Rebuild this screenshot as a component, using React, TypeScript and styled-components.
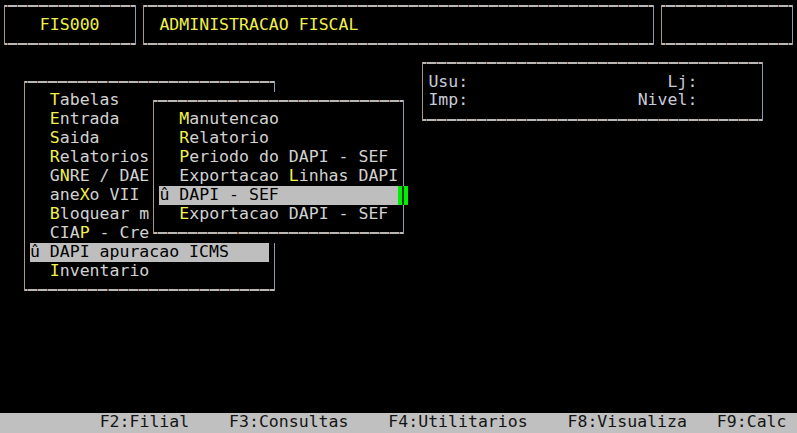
import React from "react";
import styled, { createGlobalStyle } from "styled-components";

// terminal grid: 80 columns x 23 rows
const CW = 797 / 80;
const RH = 18.9;
const OFF = -3;

const GlobalStyle = createGlobalStyle`
  html, body {
    margin: 0;
    padding: 0;
    background: #000;
  }
  body {
    overflow: hidden;
  }
`;

const Screen = styled.div`
  width: 797px;
  height: 433px;
  display: flex;
  flex-direction: column;
  background: #000;
  font-family: "DejaVu Sans Mono", "Liberation Mono", monospace;
  font-size: 16.55px;
  line-height: ${RH}px;
  color: #d2d2d2;
  overflow: hidden;
`;

const Desktop = styled.div`
  position: relative;
  flex: 1;
`;

type Rect = { $c1: number; $r1: number; $c2: number; $r2: number };

// a text-mode window, placed on the terminal grid by its cell corners
const Win = styled.div<Rect>`
  position: absolute;
  left: ${(p) => p.$c1 * CW}px;
  top: ${(p) => p.$r1 * RH + OFF}px;
  width: ${(p) => (p.$c2 - p.$c1 + 1) * CW}px;
  height: ${(p) => (p.$r2 - p.$r1 + 1) * RH}px;
  padding-top: ${RH}px;
  box-sizing: border-box;
  display: flex;
  flex-direction: column;
  background: #000;

  &::before {
    content: "";
    position: absolute;
    left: ${CW / 2 - 0.5}px;
    right: ${CW / 2 - 0.5}px;
    top: ${RH / 2 - 1}px;
    bottom: ${RH / 2 - 1}px;
    border-style: solid;
    border-width: 2px 0;
    border-image: repeating-linear-gradient(
        to right,
        #b8b8b8 0 ${CW / 2 - 0.5}px,
        #8a5a3a ${CW / 2 - 0.5}px ${CW / 2 + 0.5}px,
        #b8b8b8 ${CW / 2 + 0.5}px ${CW}px
      )
      2;
    pointer-events: none;
  }

  &::after {
    content: "";
    position: absolute;
    left: ${CW / 2 - 1}px;
    right: ${CW / 2 - 1}px;
    top: ${RH / 2 - 1}px;
    bottom: ${RH / 2 - 1}px;
    border-left: 1px solid #a89a8a;
    border-right: 1px solid #8e9ab0;
    pointer-events: none;
  }
`;

const Line = styled.div<{ $indent?: number }>`
  height: ${RH}px;
  white-space: pre;
  padding-left: ${(p) => (p.$indent ?? 3) * CW}px;
`;

const Title = styled(Line)`
  color: #f0f04a;
`;

const Selected = styled.div`
  position: relative;
  height: ${RH}px;
  margin-left: ${CW}px;
  width: ${24 * CW}px;
  white-space: pre;
  background: #bebebe;
  color: #000;
`;

const Key = styled.span`
  color: #f2f24a;
`;

const Cursor = styled.span`
  position: absolute;
  z-index: 1;
  left: 100%;
  top: 0;
  width: ${CW}px;
  height: ${RH}px;
  background: #00ee00;

  &::after {
    content: "";
    position: absolute;
    left: ${CW / 2 - 1}px;
    top: 0;
    bottom: 0;
    width: 2px;
    background: #0a3a0a;
  }
`;

const InfoLine = styled.div`
  height: ${RH}px;
  display: flex;
  justify-content: space-between;
  padding: 0 ${7 * CW}px 0 ${CW}px;
  color: #c8ccd8;
  white-space: pre;
`;

const StatusBar = styled.div`
  flex: none;
  height: ${433 - (22 * RH + OFF)}px;
  display: flex;
  padding-left: ${10 * CW}px;
  background: #c0c0c0;
  color: #141414;
  white-space: pre;
`;

const FKey = styled.span<{ $gap: number }>`
  margin-right: ${(p) => p.$gap * CW}px;
`;

type Item = { pre?: string; hot: string; post: string };

const Entry = ({ pre = "", hot, post }: Item) => (
  <Line>
    {pre}
    <Key>{hot}</Key>
    {post}
  </Line>
);

const menu: Item[] = [
  { hot: "T", post: "abelas" },
  { hot: "E", post: "ntrada" },
  { hot: "S", post: "aida" },
  { hot: "R", post: "elatorios" },
  { pre: "G", hot: "N", post: "RE / DAE" },
  { pre: "ane", hot: "X", post: "o VII" },
  { hot: "B", post: "loquear m" },
  { pre: "CIA", hot: "P", post: " - Cre" },
];

const submenu: Item[] = [
  { hot: "M", post: "anutencao" },
  { hot: "R", post: "elatorio" },
  { hot: "P", post: "eriodo do DAPI - SEF" },
  { pre: "Exportacao ", hot: "L", post: "inhas DAPI" },
];

const fkeys = [
  { label: "F2:Filial", gap: 4 },
  { label: "F3:Consultas", gap: 4 },
  { label: "F4:Utilitarios", gap: 4 },
  { label: "F8:Visualiza", gap: 3 },
  { label: "F9:Calc", gap: 0 },
];

export default function App() {
  return (
    <>
      <GlobalStyle />
      <Screen>
        <Desktop>
          <Win $c1={0} $r1={0} $c2={13} $r2={2}>
            <Title $indent={4}>FIS000</Title>
          </Win>
          <Win $c1={14} $r1={0} $c2={65} $r2={2}>
            <Title $indent={2}>ADMINISTRACAO FISCAL</Title>
          </Win>
          <Win $c1={66} $r1={0} $c2={79} $r2={2} />

          <Win $c1={42} $r1={3} $c2={76} $r2={6}>
            <InfoLine>
              <span>Usu:</span>
              <span>Lj:</span>
            </InfoLine>
            <InfoLine>
              <span>Imp:</span>
              <span>Nivel:</span>
            </InfoLine>
          </Win>

          <Win $c1={2} $r1={4} $c2={27} $r2={15}>
            {menu.map((m, i) => (
              <Entry key={i} {...m} />
            ))}
            <Selected>û DAPI apuracao ICMS</Selected>
            <Entry hot="I" post="nventario" />
          </Win>

          <Win $c1={15} $r1={5} $c2={40} $r2={12}>
            {submenu.map((m, i) => (
              <Entry key={i} {...m} />
            ))}
            <Selected>
              û DAPI - SEF
              <Cursor />
            </Selected>
            <Entry hot="E" post="xportacao DAPI - SEF" />
          </Win>
        </Desktop>
        <StatusBar>
          {fkeys.map((f) => (
            <FKey key={f.label} $gap={f.gap}>
              {f.label}
            </FKey>
          ))}
        </StatusBar>
      </Screen>
    </>
  );
}
